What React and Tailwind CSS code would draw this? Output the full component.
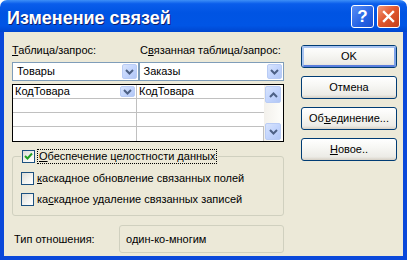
import React from "react";

function Chevron({ up = false }) {
  return (
    <svg width="9" height="6" viewBox="0 0 9 6" className="block">
      {up ? (
        <polyline points="1,5 4.5,1.5 8,5" fill="none" stroke="#4D6185" strokeWidth="2" />
      ) : (
        <polyline points="1,1 4.5,4.5 8,1" fill="none" stroke="#4D6185" strokeWidth="2" />
      )}
    </svg>
  );
}

function DropBtn({ className = "", up = false }) {
  return (
    <div
      className={
        "flex items-center justify-center rounded-[2px] border border-[#B9CCF5] bg-[linear-gradient(135deg,#D8E4FC_0%,#C3D5FD_50%,#B2C7F5_100%)] " +
        className
      }
    >
      <Chevron up={up} />
    </div>
  );
}

function Combo({ text, className = "" }) {
  return (
    <div className={"flex h-[19px] items-center border border-[#7F9DB9] bg-white pl-[4px] pr-[1px] " + className}>
      <span className="flex-1 leading-none">{text}</span>
      <DropBtn className="h-[15px] w-[15px]" />
    </div>
  );
}

function XpButton({ children, def = false }) {
  return (
    <div className="flex h-[23px] w-[96px] items-center justify-center rounded-[3px] border border-[#003C74] bg-[linear-gradient(180deg,#FFFFFF_0%,#F7F7F4_40%,#ECEBE6_85%,#D6D0C5_100%)]">
      <div
        className={
          "flex h-full w-full items-center justify-center rounded-[2px] " +
          (def ? "border-2 border-[#A9C4F0] border-b-[#5A7EDC] border-r-[#7DA2E8]" : "")
        }
      >
        {children}
      </div>
    </div>
  );
}

function Check({ checked, children }) {
  return (
    <div className="flex h-[14px] items-center">
      <div className="flex h-[13px] w-[13px] items-center justify-center border border-[#1C5180] bg-[linear-gradient(135deg,#DCDCD7_0%,#F5F5F2_60%,#FFFFFF_100%)]">
        {checked && (
          <svg width="9" height="9" viewBox="0 0 9 9">
            <polyline points="1,4 3.5,6.5 8,1.5" fill="none" stroke="#21A121" strokeWidth="2" />
          </svg>
        )}
      </div>
      <span className="ml-[3px] leading-none">{children}</span>
    </div>
  );
}

export default function App() {
  return (
    <div className="flex h-[260px] w-[407px] flex-col overflow-hidden font-['Tahoma','Liberation_Sans',sans-serif] text-[11px] text-black">
      {/* Title bar */}
      <div className="flex h-[32px] shrink-0 items-center rounded-t-[7px] bg-[linear-gradient(180deg,#3D8FF7_0%,#0A5DEB_12%,#0054E3_40%,#0055E5_80%,#0046CF_100%)] pl-[7px] pr-[7px]">
        <span className="flex-1 pt-[3px] font-['Liberation_Sans',sans-serif] text-[18px] font-bold leading-none text-white [text-shadow:1px_1px_0_#0F1E6E]">
          Изменение связей
        </span>
        <div className="flex gap-[3px]">
          <div className="flex h-[23px] w-[23px] items-center justify-center rounded-[3px] border border-white bg-[linear-gradient(135deg,#5A8FF5_0%,#2563E5_60%,#1B4FD0_100%)] font-['Liberation_Sans',sans-serif] text-[17px] font-bold leading-none text-white">
            ?
          </div>
          <div className="flex h-[23px] w-[23px] items-center justify-center rounded-[3px] border border-white bg-[linear-gradient(135deg,#F09A7B_0%,#E2582F_45%,#C4401C_100%)]">
            <svg width="13" height="13" viewBox="0 0 13 13">
              <path d="M2 2 L11 11 M11 2 L2 11" stroke="white" strokeWidth="2.4" strokeLinecap="square" />
            </svg>
          </div>
        </div>
      </div>

      {/* Body */}
      <div className="flex flex-1 border-x-4 border-b-4 border-[#0A48DA] bg-[#ECE9D8]">
        {/* Left column */}
        <div className="ml-[8px] flex w-[272px] flex-col pt-[11px]">
          <div className="flex h-[14px] items-center">
            <span className="w-[127px]">
              <u>Т</u>аблица/запрос:
            </span>
            <span className="ml-[1px]">
              С<u>в</u>язанная таблица/запрос:
            </span>
          </div>
          <div className="mt-[5px] flex">
            <Combo text="Товары" className="w-[127px]" />
            <Combo text="Заказы" className="w-[146px]" />
          </div>
          <div className="mt-[3px] flex h-[58px] border border-black bg-white">
            <div className="flex flex-1 flex-col">
              <div className="flex h-[14px] border-b border-[#C0C0C0]">
                <div className="flex w-[124px] items-center border-r border-[#C0C0C0] pl-[2px] pr-[1px]">
                  <span className="flex-1 leading-none">КодТовара</span>
                  <DropBtn className="h-[11px] w-[15px]" />
                </div>
                <div className="flex flex-1 items-center pl-[2px] leading-none">КодТовара</div>
              </div>
              <div className="flex h-[14px] border-b border-[#C0C0C0]">
                <div className="w-[124px] border-r border-[#C0C0C0]" />
                <div className="flex-1" />
              </div>
              <div className="flex h-[14px] border-b border-[#C0C0C0]">
                <div className="w-[124px] border-r border-[#C0C0C0]" />
                <div className="flex-1" />
              </div>
              <div className="flex flex-1">
                <div className="w-[124px] border-r border-[#C0C0C0]" />
                <div className="flex-1 border-r border-[#C0C0C0]" />
              </div>
            </div>
            <div className="flex w-[19px] flex-col justify-between bg-[linear-gradient(90deg,#F3F1EC_0%,#FEFEFB_100%)] px-[1px] py-[1px]">
              <DropBtn up className="h-[17px] w-[16px]" />
              <DropBtn className="h-[17px] w-[16px]" />
            </div>
          </div>

          <fieldset className="mt-[7px] h-[67px] rounded-[3px] border border-[#D0D0BF] px-[8px]">
            <legend className="ml-[0px] px-[1px]">
              <div className="flex items-center">
                <div className="flex h-[13px] w-[13px] items-center justify-center border border-[#1C5180] bg-[linear-gradient(135deg,#DCDCD7_0%,#F5F5F2_60%,#FFFFFF_100%)]">
                  <svg width="9" height="9" viewBox="0 0 9 9">
                    <polyline points="1,4 3.5,6.5 8,1.5" fill="none" stroke="#21A121" strokeWidth="2" />
                  </svg>
                </div>
                <span className="ml-[2px] border border-dotted border-black px-[1px] py-[1px] leading-none">
                  <u>О</u>беспечение целостности данных
                </span>
              </div>
            </legend>
            <div className="mt-[7px] flex flex-col gap-[7px]">
              <Check>
                <u>к</u>аскадное обновление связанных полей
              </Check>
              <Check>
                ка<u>с</u>кадное удаление связанных записей
              </Check>
            </div>
          </fieldset>

          <div className="mt-[9px] flex items-center">
            <span className="ml-[2px] w-[105px]">Тип отношения:</span>
            <div className="flex h-[28px] w-[165px] items-center rounded-[3px] border border-[#D0D0BF] pl-[6px]">
              один-ко-многим
            </div>
          </div>
        </div>

        {/* Right column */}
        <div className="ml-[17px] flex flex-col gap-[8px] pt-[13px]">
          <XpButton def>OK</XpButton>
          <XpButton>Отмена</XpButton>
          <XpButton>
            Об<u>ъ</u>единение...
          </XpButton>
          <XpButton>
            <u>Н</u>овое..
          </XpButton>
        </div>
      </div>
    </div>
  );
}
